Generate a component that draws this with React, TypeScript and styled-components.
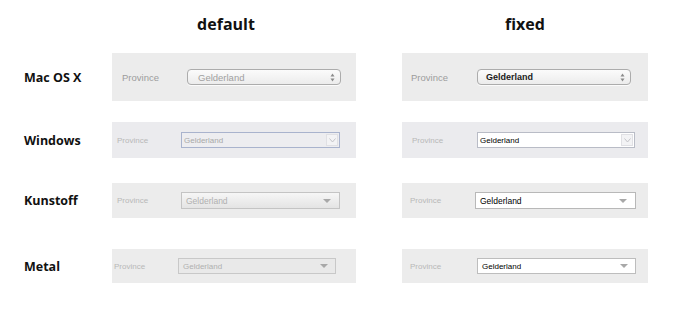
import React from "react";
import styled, { createGlobalStyle, css } from "styled-components";

type Skin = "mac" | "windows" | "kunstoff" | "metal";
type Area = "def" | "fix";

interface Variant {
  skin: Skin;
  fixed: boolean;
  labelLeft: number;
  selectLeft: number;
  selectWidth: number;
}

interface RowData {
  name: string;
  gap: number;
  height: number;
  defaults: Variant;
  fixed: Variant;
}

const rows: RowData[] = [
  {
    name: "Mac OS X",
    gap: 0,
    height: 48,
    defaults: { skin: "mac", fixed: false, labelLeft: 10, selectLeft: 75, selectWidth: 154 },
    fixed: { skin: "mac", fixed: true, labelLeft: 9, selectLeft: 75, selectWidth: 154 },
  },
  {
    name: "Windows",
    gap: 21,
    height: 36,
    defaults: { skin: "windows", fixed: false, labelLeft: 5, selectLeft: 69, selectWidth: 159 },
    fixed: { skin: "windows", fixed: true, labelLeft: 10, selectLeft: 75, selectWidth: 158 },
  },
  {
    name: "Kunstoff",
    gap: 25,
    height: 35,
    defaults: { skin: "kunstoff", fixed: false, labelLeft: 5, selectLeft: 69, selectWidth: 159 },
    fixed: { skin: "kunstoff", fixed: true, labelLeft: 8, selectLeft: 73, selectWidth: 161 },
  },
  {
    name: "Metal",
    gap: 31,
    height: 34,
    defaults: { skin: "metal", fixed: false, labelLeft: 2, selectLeft: 66, selectWidth: 158 },
    fixed: { skin: "metal", fixed: true, labelLeft: 8, selectLeft: 75, selectWidth: 159 },
  },
];

const LABEL_WIDTH = 64;

const GlobalStyle = createGlobalStyle`
  body {
    margin: 0;
    background: #ffffff;
    font-family: "Open Sans", "DejaVu Sans", sans-serif;
  }
`;

const Page = styled.div`
  width: 690px;
  height: 313px;
  display: flex;
  flex-direction: column;
`;

const Grid = styled.div`
  display: grid;
  grid-template-columns: 112px 244px 46px 246px;
  grid-template-areas: "label def . fix";
`;

const HeaderRow = styled(Grid)`
  height: 53px;
  align-items: start;
`;

const Heading = styled.div<{ $area: Area; $shift: number }>`
  grid-area: ${(p) => p.$area};
  padding-top: 13px;
  padding-right: ${(p) => p.$shift}px;
  text-align: center;
  font-size: 16px;
  font-weight: 700;
  color: #111;
`;

const Row = styled(Grid)<{ $gap: number; $height: number }>`
  margin-top: ${(p) => p.$gap}px;
  height: ${(p) => p.$height}px;
  align-items: stretch;
`;

const RowLabel = styled.div`
  grid-area: label;
  display: flex;
  align-items: center;
  padding-left: 24px;
  font-size: 12.5px;
  font-weight: 700;
  color: #111;
`;

const Panel = styled.div<{ $skin: Skin; $area: Area }>`
  grid-area: ${(p) => p.$area};
  display: flex;
  align-items: center;
  background: ${(p) => (p.$skin === "windows" ? "#ebebee" : "#ececec")};
`;

const FieldLabel = styled.span<{ $skin: Skin; $left: number }>`
  width: ${LABEL_WIDTH}px;
  margin-left: ${(p) => p.$left}px;
  font-family: "Liberation Sans", sans-serif;
  font-size: ${(p) => (p.$skin === "mac" ? "9.5px" : "8px")};
  color: ${(p) => (p.$skin === "mac" ? "#9c9c9c" : "#b8b8b8")};
  white-space: nowrap;
  flex-shrink: 0;
`;

const macSelect = css<{ $fixed: boolean }>`
  height: 16px;
  border: 1px solid #acacac;
  border-radius: 4px;
  background: linear-gradient(#fbfbfb, #ececec);
  box-shadow: 0 1px 0 rgba(255, 255, 255, 0.8);
  padding-left: ${(p) => (p.$fixed ? 8 : 10)}px;
  font-family: "Liberation Sans", sans-serif;
  font-size: ${(p) => (p.$fixed ? "9px" : "9.5px")};
  font-weight: ${(p) => (p.$fixed ? 700 : 400)};
  color: ${(p) => (p.$fixed ? "#1a1a1a" : "#a0a0a0")};
`;

const windowsSelect = css<{ $fixed: boolean }>`
  height: 16px;
  border: 1px solid ${(p) => (p.$fixed ? "#b9bcc6" : "#a9b3cd")};
  background: ${(p) => (p.$fixed ? "#ffffff" : "#ededf0")};
  padding-left: 2px;
  font-family: "Liberation Sans", sans-serif;
  font-size: 8px;
  color: ${(p) => (p.$fixed ? "#000" : "#a8a8a8")};
`;

const kunstoffSelect = css<{ $fixed: boolean }>`
  height: 17px;
  border: 1px solid ${(p) => (p.$fixed ? "#b8b8b8" : "#c4c4c4")};
  background: ${(p) => (p.$fixed ? "#ffffff" : "linear-gradient(#f6f6f6, #e4e4e4)")};
  padding-left: 4px;
  font-family: "Liberation Sans", sans-serif;
  font-size: 8.5px;
  color: ${(p) => (p.$fixed ? "#000" : "#b0b0b0")};
`;

const metalSelect = css<{ $fixed: boolean }>`
  height: 16px;
  border: 1px solid ${(p) => (p.$fixed ? "#bdbdbd" : "#c8c8c8")};
  background: ${(p) => (p.$fixed ? "#ffffff" : "#e9e9e9")};
  padding-left: 4px;
  font-family: "Liberation Sans", sans-serif;
  font-size: 8px;
  color: ${(p) => (p.$fixed ? "#000" : "#b0b0b0")};
`;

const skins = {
  mac: macSelect,
  windows: windowsSelect,
  kunstoff: kunstoffSelect,
  metal: metalSelect,
};

const Select = styled.div<{ $skin: Skin; $fixed: boolean; $left: number; $width: number }>`
  box-sizing: border-box;
  display: flex;
  align-items: center;
  justify-content: space-between;
  margin-left: ${(p) => p.$left}px;
  width: ${(p) => p.$width}px;
  flex-shrink: 0;
  ${(p) => skins[p.$skin]}
`;

const SelectText = styled.span`
  white-space: nowrap;
`;

const WinButton = styled.span`
  width: 12px;
  height: 12px;
  margin-right: 1px;
  box-sizing: border-box;
  border: 1px solid #e0e0e4;
  background: #f3f3f5;
  display: flex;
  align-items: center;
  justify-content: center;
`;

const ArrowSlot = styled.span<{ $right: number }>`
  display: flex;
  align-items: center;
  margin-right: ${(p) => p.$right}px;
`;

function Arrow({ skin }: { skin: Skin }) {
  if (skin === "mac") {
    return (
      <ArrowSlot $right={5}>
        <svg width="5" height="9" viewBox="0 0 5 9">
          <path d="M2.5 0.5 L4.5 3.5 L0.5 3.5 Z" fill="#8a8a8a" />
          <path d="M2.5 8.5 L4.5 5.5 L0.5 5.5 Z" fill="#8a8a8a" />
        </svg>
      </ArrowSlot>
    );
  }
  if (skin === "windows") {
    return (
      <WinButton>
        <svg width="7" height="5" viewBox="0 0 7 5">
          <path d="M0.5 0.5 L3.5 4 L6.5 0.5" fill="none" stroke="#c3c3c8" strokeWidth="1" />
        </svg>
      </WinButton>
    );
  }
  return (
    <ArrowSlot $right={skin === "metal" ? 7 : 8}>
      <svg width="8" height="4" viewBox="0 0 8 4">
        <path d="M0 0 L8 0 L4 4 Z" fill="#a8a8a8" />
      </svg>
    </ArrowSlot>
  );
}

function Field({ v, area }: { v: Variant; area: Area }) {
  return (
    <Panel $skin={v.skin} $area={area}>
      <FieldLabel $skin={v.skin} $left={v.labelLeft}>
        Province
      </FieldLabel>
      <Select
        $skin={v.skin}
        $fixed={v.fixed}
        $left={v.selectLeft - v.labelLeft - LABEL_WIDTH}
        $width={v.selectWidth}
      >
        <SelectText>Gelderland</SelectText>
        <Arrow skin={v.skin} />
      </Select>
    </Panel>
  );
}

export default function App() {
  return (
    <>
      <GlobalStyle />
      <Page>
        <HeaderRow>
          <Heading $area="def" $shift={16}>
            default
          </Heading>
          <Heading $area="fix" $shift={0}>
            fixed
          </Heading>
        </HeaderRow>
        {rows.map((r) => (
          <Row key={r.name} $gap={r.gap} $height={r.height}>
            <RowLabel>{r.name}</RowLabel>
            <Field v={r.defaults} area="def" />
            <Field v={r.fixed} area="fix" />
          </Row>
        ))}
      </Page>
    </>
  );
}
